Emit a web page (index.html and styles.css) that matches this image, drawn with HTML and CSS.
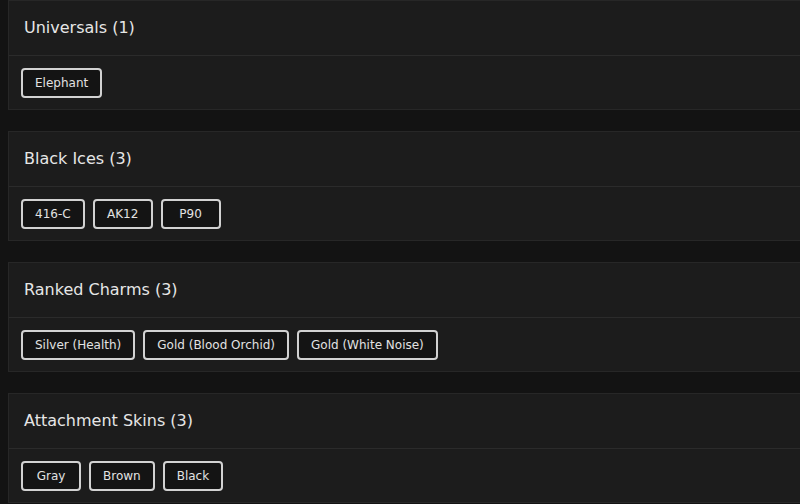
FILE: index.html
```html
<!DOCTYPE html>
<html>
<head>
<meta charset="utf-8">
<link rel="stylesheet" href="styles.css">
</head>
<body>
<main class="list">
  <section class="card">
    <header class="card-head"><h2>Universals (1)</h2></header>
    <div class="card-body">
      <span class="tag">Elephant</span>
    </div>
  </section>
  <section class="card">
    <header class="card-head"><h2>Black Ices (3)</h2></header>
    <div class="card-body">
      <span class="tag">416-C</span>
      <span class="tag">AK12</span>
      <span class="tag">P90</span>
    </div>
  </section>
  <section class="card">
    <header class="card-head"><h2>Ranked Charms (3)</h2></header>
    <div class="card-body">
      <span class="tag">Silver (Health)</span>
      <span class="tag">Gold (Blood Orchid)</span>
      <span class="tag">Gold (White Noise)</span>
    </div>
  </section>
  <section class="card">
    <header class="card-head"><h2>Attachment Skins (3)</h2></header>
    <div class="card-body">
      <span class="tag">Gray</span>
      <span class="tag">Brown</span>
      <span class="tag">Black</span>
    </div>
  </section>
</main>
</body>
</html>
```
FILE: styles.css
```css
html, body {
  margin: 0;
  padding: 0;
  background: #131313;
  overflow: hidden;
}
body {
  font-family: "DejaVu Sans", "Noto Sans", sans-serif;
  color: #e4e4e4;
}
.list {
  display: flex;
  flex-direction: column;
  gap: 21px;
  padding-left: 8px;
  margin-right: -12px;
}
.card {
  background: #1c1c1c;
  border: 1px solid #272727;
  height: 110px;
  box-sizing: border-box;
  display: flex;
  flex-direction: column;
}
.card-head {
  height: 55px;
  flex: none;
  box-sizing: border-box;
  border-bottom: 1px solid #2b2b2b;
  display: flex;
  align-items: center;
  padding: 0 15px 1px;
}
.card-head h2 {
  margin: 0;
  font-size: 16px;
  font-weight: 500;
  color: #e6e6e6;
}
.card-body {
  flex: 1;
  display: flex;
  align-items: center;
  gap: 8px;
  padding: 0 12px;
}
.tag {
  box-sizing: border-box;
  height: 30px;
  min-width: 60px;
  padding: 0 12px;
  display: inline-flex;
  align-items: center;
  justify-content: center;
  border: 2px solid #d2d2d2;
  border-radius: 4px;
  background: #141414;
  font-size: 12px;
  color: #e2e2e2;
}
```
